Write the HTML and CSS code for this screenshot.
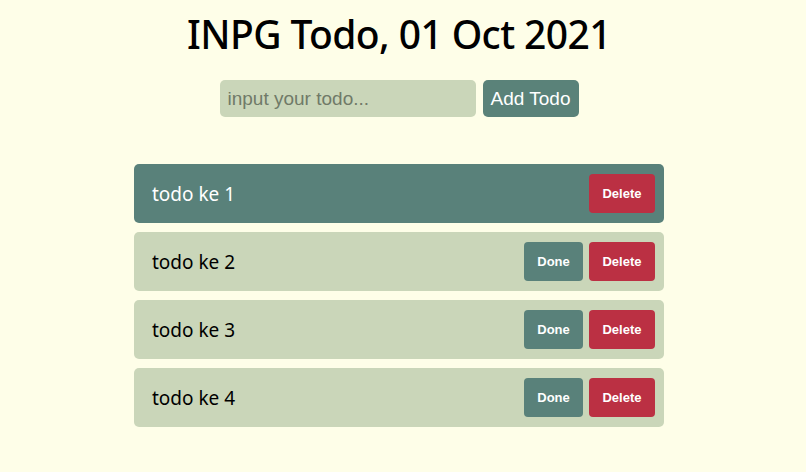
FILE: index.html
```html
<!DOCTYPE html>
<html>
<head>
<meta charset="utf-8">
<link rel="stylesheet" href="styles.css">
</head>
<body>
<main class="app">
  <h1 class="title">INPG Todo, 01 Oct 2021</h1>
  <form class="add-form">
    <input class="add-input" type="text" placeholder="input your todo...">
    <button class="add-btn" type="button">Add Todo</button>
  </form>
  <ul class="todo-list">
    <li class="todo done-item">
      <span class="todo-text">todo ke 1</span>
      <div class="actions"><button class="btn btn-delete" type="button">Delete</button></div>
    </li>
    <li class="todo">
      <span class="todo-text">todo ke 2</span>
      <div class="actions"><button class="btn btn-done" type="button">Done</button><button class="btn btn-delete" type="button">Delete</button></div>
    </li>
    <li class="todo">
      <span class="todo-text">todo ke 3</span>
      <div class="actions"><button class="btn btn-done" type="button">Done</button><button class="btn btn-delete" type="button">Delete</button></div>
    </li>
    <li class="todo">
      <span class="todo-text">todo ke 4</span>
      <div class="actions"><button class="btn btn-done" type="button">Done</button><button class="btn btn-delete" type="button">Delete</button></div>
    </li>
  </ul>
</main>
</body>
</html>
```
FILE: styles.css
```css
* { box-sizing: border-box; }
html, body { margin: 0; padding: 0; }
body {
  background: #fefee8;
  font-family: "Noto Sans", "Open Sans", sans-serif;
  color: #000;
}
.app {
  display: flex;
  flex-direction: column;
  align-items: center;
  padding: 12px 8px 0 0;
}
.title {
  margin: 0;
  font-size: 39px;
  font-weight: 500;
  line-height: 44px;
  letter-spacing: -0.6px;
}
.add-form {
  display: flex;
  gap: 7px;
  margin-top: 24px;
}
.add-input {
  width: 256px;
  height: 37px;
  border: none;
  border-radius: 5px;
  background: #cad6b9;
  padding: 0 8px;
  font-family: "Liberation Sans", Arial, sans-serif;
  font-size: 19px;
  color: #333;
  outline: none;
}
.add-input::placeholder { color: #707a68; }
.add-btn {
  height: 37px;
  width: 96px;
  border: none;
  border-radius: 5px;
  background: #5a8279;
  color: #fff;
  font-family: "Liberation Sans", Arial, sans-serif;
  font-size: 19px;
  padding: 0;
}
.todo-list {
  list-style: none;
  margin: 47px 0 0;
  padding: 0;
  width: 530px;
  display: flex;
  flex-direction: column;
  gap: 9px;
}
.todo {
  height: 59px;
  border-radius: 5px;
  background: #cad6b9;
  display: flex;
  align-items: center;
  justify-content: space-between;
  padding: 0 9px 0 18px;
}
.todo.done-item { background: #59817a; color: #fff; }
.todo-text {
  font-size: 19px;
  font-weight: 400;
}
.actions { display: flex; gap: 6px; }
.btn {
  height: 39px;
  border: none;
  border-radius: 4px;
  color: #fff;
  font-family: "Liberation Sans", Arial, sans-serif;
  font-weight: bold;
  font-size: 13px;
  padding: 0;
}
.btn-done { width: 59px; background: #59817a; }
.btn-delete { width: 66px; background: #bb3043; }
```
